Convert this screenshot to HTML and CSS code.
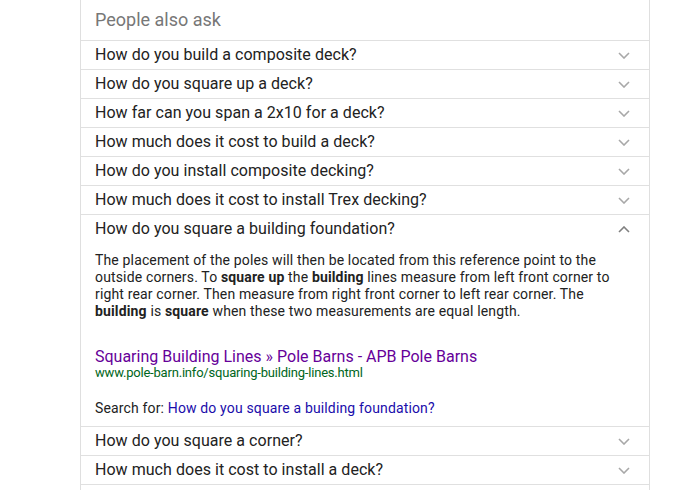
FILE: index.html
```html
<!DOCTYPE html>
<html lang="en">
<head>
<meta charset="utf-8">
<title>People also ask</title>
<link rel="stylesheet" href="styles.css">
</head>
<body>
<div class="card">
  <div class="head">People also ask</div>
  <div class="row"><span class="q">How do you build a composite deck?</span><svg class="chev" viewBox="0 0 12 7"><polyline points="1,1 6,6 11,1"/></svg></div>
  <div class="row"><span class="q">How do you square up a deck?</span><svg class="chev" viewBox="0 0 12 7"><polyline points="1,1 6,6 11,1"/></svg></div>
  <div class="row"><span class="q">How far can you span a 2x10 for a deck?</span><svg class="chev" viewBox="0 0 12 7"><polyline points="1,1 6,6 11,1"/></svg></div>
  <div class="row"><span class="q">How much does it cost to build a deck?</span><svg class="chev" viewBox="0 0 12 7"><polyline points="1,1 6,6 11,1"/></svg></div>
  <div class="row"><span class="q">How do you install composite decking?</span><svg class="chev" viewBox="0 0 12 7"><polyline points="1,1 6,6 11,1"/></svg></div>
  <div class="row"><span class="q">How much does it cost to install Trex decking?</span><svg class="chev" viewBox="0 0 12 7"><polyline points="1,1 6,6 11,1"/></svg></div>
  <div class="item open">
    <div class="qrow"><span class="q">How do you square a building foundation?</span><svg class="chev up" viewBox="0 0 12 7"><polyline points="1,6 6,1 11,6"/></svg></div>
    <div class="answer">
      <p class="text">The placement of the poles will then be located from this reference point to the outside corners. To <b>square up</b> the <b>building</b> lines measure from left front corner to right rear corner. Then measure from right front corner to left rear corner. The <b>building</b> is <b>square</b> when these two measurements are equal length.</p>
      <a class="title" href="#">Squaring Building Lines » Pole Barns - APB Pole Barns</a>
      <div class="url">www.pole-barn.info/squaring-building-lines.html</div>
      <div class="search">Search for: <a href="#">How do you square a building foundation?</a></div>
    </div>
  </div>
  <div class="row"><span class="q">How do you square a corner?</span><svg class="chev" viewBox="0 0 12 7"><polyline points="1,1 6,6 11,1"/></svg></div>
  <div class="row"><span class="q">How much does it cost to install a deck?</span><svg class="chev" viewBox="0 0 12 7"><polyline points="1,1 6,6 11,1"/></svg></div>
  <div class="row last"></div>
</div>
</body>
</html>
```
FILE: styles.css
```css
html, body {
  margin: 0;
  padding: 0;
  background: #fff;
}
body {
  font-family: Roboto, "Liberation Sans", Arial, sans-serif;
  color: #222;
  height: 490px;
  overflow: hidden;
}
.card {
  margin-left: 80px;
  width: 568px;
  border-left: 1px solid #dfdfdf;
  border-right: 1px solid #dfdfdf;
}
.head {
  height: 40px;
  line-height: 39px;
  padding-left: 14px;
  font-size: 18px;
  color: #777;
}
.row, .qrow {
  display: flex;
  align-items: center;
  justify-content: space-between;
  height: 28px;
  padding: 0 19px 0 14px;
}
.row, .item {
  border-top: 1px solid #e0e0e0;
}
.q {
  font-size: 16px;
  color: #222;
  line-height: 28px;
  letter-spacing: 0.04px;
}
.chev {
  width: 12px;
  height: 7px;
  fill: none;
  stroke: #a8a8a8;
  stroke-width: 1.6;
}
.chev.up {
  stroke: #808080;
}
.answer {
  padding: 9px 14px 9px 14px;
}
.text {
  margin: 0;
  font-size: 14px;
  line-height: 17px;
  letter-spacing: 0.15px;
  color: #222;
  width: 530px;
}
.text b {
  font-weight: 700;
}
.title {
  display: block;
  margin-top: 28px;
  font-size: 16px;
  line-height: 18px;
  color: #609;
  text-decoration: none;
}
.url {
  font-size: 13px;
  line-height: 14px;
  letter-spacing: -0.2px;
  color: #006621;
}
.search {
  margin-top: 19px;
  font-size: 14px;
  line-height: 18px;
  letter-spacing: 0.15px;
  color: #222;
}
.search a {
  color: #1a0dab;
  text-decoration: none;
}
.row.last {
  height: 20px;
}
```
